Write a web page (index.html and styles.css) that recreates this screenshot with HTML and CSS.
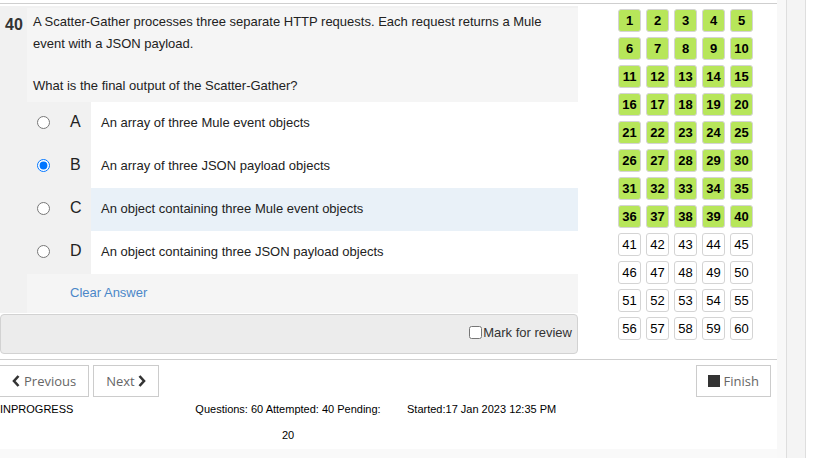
FILE: index.html
```html
<!DOCTYPE html>
<html>
<head>
<meta charset="utf-8">
<link rel="stylesheet" href="styles.css">
</head>
<body>
<div class="page">
  <div class="main">
    <div class="content">
      <div class="qcol">
        <div class="qpanel">
          <div class="qnum">40</div>
          <div class="qbody">
            <div class="qtext">
              <p class="qp">A Scatter-Gather processes three separate HTTP requests. Each request returns a Mule event with a JSON payload.</p>
              <p class="qp qp2">What is the final output of the Scatter-Gather?</p>
            </div>
            <div class="opt">
              <div class="opt-sel"><input type="radio" name="a" class="radio"><span class="letter">A</span></div>
              <div class="otext">An array of three Mule event objects</div>
            </div>
            <div class="opt">
              <div class="opt-sel"><input type="radio" name="a" class="radio" checked><span class="letter">B</span></div>
              <div class="otext">An array of three JSON payload objects</div>
            </div>
            <div class="opt">
              <div class="opt-sel"><input type="radio" name="a" class="radio"><span class="letter">C</span></div>
              <div class="otext hover">An object containing three Mule event objects</div>
            </div>
            <div class="opt">
              <div class="opt-sel"><input type="radio" name="a" class="radio"><span class="letter">D</span></div>
              <div class="otext">An object containing three JSON payload objects</div>
            </div>
            <div class="clear-row"><span class="clear">Clear Answer</span></div>
          </div>
        </div>
        <div class="markbar"><label class="mark"><input type="checkbox" class="chk">Mark for review</label></div>
      </div>
      <div class="palette">
        <div class="grid">
          <span class="q done">1</span><span class="q done">2</span><span class="q done">3</span><span class="q done">4</span><span class="q done">5</span>
          <span class="q done">6</span><span class="q done">7</span><span class="q done">8</span><span class="q done">9</span><span class="q done">10</span>
          <span class="q done">11</span><span class="q done">12</span><span class="q done">13</span><span class="q done">14</span><span class="q done">15</span>
          <span class="q done">16</span><span class="q done">17</span><span class="q done">18</span><span class="q done">19</span><span class="q done">20</span>
          <span class="q done">21</span><span class="q done">22</span><span class="q done">23</span><span class="q done">24</span><span class="q done">25</span>
          <span class="q done">26</span><span class="q done">27</span><span class="q done">28</span><span class="q done">29</span><span class="q done">30</span>
          <span class="q done">31</span><span class="q done">32</span><span class="q done">33</span><span class="q done">34</span><span class="q done">35</span>
          <span class="q done">36</span><span class="q done">37</span><span class="q done">38</span><span class="q done">39</span><span class="q done">40</span>
          <span class="q">41</span><span class="q">42</span><span class="q">43</span><span class="q">44</span><span class="q">45</span>
          <span class="q">46</span><span class="q">47</span><span class="q">48</span><span class="q">49</span><span class="q">50</span>
          <span class="q">51</span><span class="q">52</span><span class="q">53</span><span class="q">54</span><span class="q">55</span>
          <span class="q">56</span><span class="q">57</span><span class="q">58</span><span class="q">59</span><span class="q">60</span>
        </div>
      </div>
    </div>
    <div class="nav">
      <div class="nav-left">
        <button class="btn"><svg class="chev" viewBox="0 0 8 12" width="8" height="12"><path d="M6.5 1 L2 6 L6.5 11" fill="none" stroke="#333" stroke-width="2.6"/></svg>Previous</button>
        <button class="btn">Next<svg class="chev chev-r" viewBox="0 0 8 12" width="8" height="12"><path d="M1.5 1 L6 6 L1.5 11" fill="none" stroke="#333" stroke-width="2.6"/></svg></button>
      </div>
      <button class="btn finish"><span class="stop"></span>Finish</button>
    </div>
    <div class="status">
      <div class="st-state">INPROGRESS</div>
      <div class="st-count">Questions: 60 Attempted: 40 Pending: 20</div>
      <div class="st-start">Started:17 Jan 2023 12:35 PM</div>
    </div>
    <div class="bottom-band"></div>
  </div>
  <div class="side">
    <div class="side-a"></div>
    <div class="side-b"></div>
    <div class="side-c"></div>
  </div>
</div>
</body>
</html>
```

FILE: styles.css
```css
* { box-sizing: border-box; }
html, body { margin: 0; padding: 0; background: #fff; }
body {
  font-family: "Liberation Sans", Arial, sans-serif;
  color: #222;
  width: 817px;
  height: 458px;
  overflow: hidden;
}
.page { display: flex; width: 817px; height: 458px; }
.main {
  width: 777px;
  flex: none;
  padding-top: 3px;
  display: flex;
  flex-direction: column;
}
.content {
  border-top: 1px solid #cfcfcf;
  display: flex;
}
.qcol { width: 578px; flex: none; padding-top: 2px; }
.qpanel { display: flex; background: #f1f1f1; }
.qnum {
  width: 27px;
  flex: none;
  font-weight: bold;
  font-size: 16px;
  color: #333;
  padding: 10px 0 0 5px;
}
.qbody { flex: 1; padding-top: 2px; }
.qtext {
  background: #f5f5f5;
  font-size: 13px;
  line-height: 22px;
  color: #222;
  padding: 3px 30px 0 6px;
  height: 94px;
}
.qp { margin: 0; }
.qp2 { margin-top: 20px; }
.opt { display: flex; height: 43px; }
.opt:last-of-type { height: 42px; }
.opt-sel {
  width: 64px;
  flex: none;
  display: flex;
  align-items: center;
  padding-bottom: 3px;
}
.radio { margin: 0 0 0 10px; width: 13px; height: 13px; }
.letter {
  font-size: 16px;
  color: #222;
  margin-left: 20px;
}
.otext {
  flex: 1;
  background: #fff;
  font-size: 13px;
  display: flex;
  align-items: center;
  padding-left: 10px;
  padding-bottom: 3px;
}
.otext.hover { background: #e9f1f8; }
.clear-row {
  background: #f5f5f5;
  height: 39px;
  display: flex;
  align-items: center;
  padding-left: 43px;
  padding-bottom: 2px;
}
.clear { color: #4b87c8; font-size: 13px; }
.markbar {
  margin-top: 1px;
  height: 40px;
  background: #ececec;
  border: 1px solid #d2d2d2;
  border-radius: 4px;
  display: flex;
  align-items: center;
  justify-content: flex-end;
  padding: 0 5px 3px 0;
}
.mark {
  font-size: 13px;
  color: #333;
  display: flex;
  align-items: center;
}
.chk { margin: 0 1px 0 0; width: 13px; height: 13px; }
.palette { flex: 1; padding: 5px 0 0 40px; }
.grid {
  display: grid;
  grid-template-columns: repeat(5, 23px);
  grid-auto-rows: 23px;
  gap: 5px;
}
.q {
  border: 1px solid #d4d4d4;
  border-radius: 3px;
  background: #fff;
  font-size: 13px;
  color: #000;
  display: flex;
  align-items: center;
  justify-content: center;
}
.q.done { background: #b7e65a; font-weight: bold; }
.nav {
  margin-top: 5px;
  border-top: 1px solid #cfcfcf;
  padding: 5px 6px 0 0;
  display: flex;
  justify-content: space-between;
}
.nav-left { display: flex; gap: 4px; margin-left: -1px; }
.btn {
  height: 32px;
  border: 1px solid #ccc;
  background: #fff;
  border-radius: 0;
  font-family: "Open Sans", sans-serif;
  font-size: 13px;
  color: #666;
  padding: 0 12px;
  display: flex;
  align-items: center;
}
.chev { margin-right: 4px; }
.chev-r { margin: 0 0 0 3px; }
.finish { padding: 0 11px; }
.stop {
  width: 12px;
  height: 12px;
  background: #333;
  margin-right: 4px;
}
.status {
  display: flex;
  font-size: 11px;
  color: #000;
  margin-top: 5px;
  height: 47px;
}
.st-state { width: 190px; flex: none; line-height: 14px; }
.st-count { width: 196px; flex: none; text-align: center; line-height: 26px; margin-top: -6px; }
.st-start { margin-left: 21px; line-height: 14px; }
.bottom-band { flex: 1; background: #f9f9f9; }
.side { flex: 1; display: flex; }
.side-a { width: 10px; background: #f8f8f8; border-right: 1px solid #dedede; }
.side-b { width: 19px; background: #f4f4f4; border-right: 1px solid #dedede; }
.side-c { flex: 1; background: #fff; }
```
